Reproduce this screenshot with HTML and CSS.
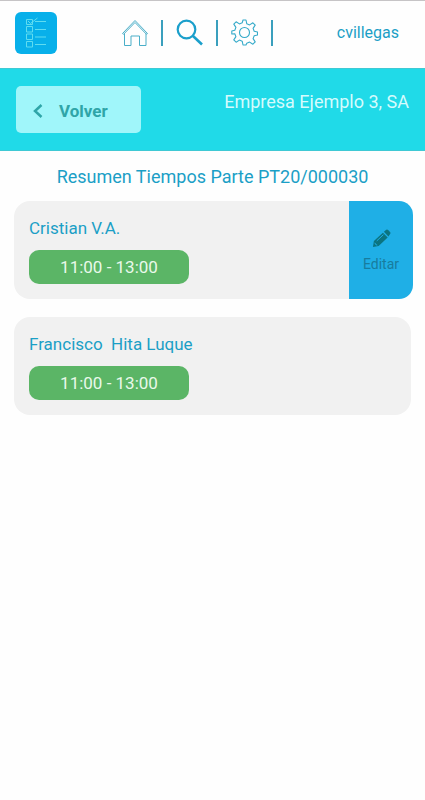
FILE: index.html
```html
<!DOCTYPE html>
<html lang="es">
<head>
<meta charset="utf-8">
<meta name="viewport" content="width=device-width, initial-scale=1">
<title>Resumen Tiempos</title>
<link rel="stylesheet" href="styles.css">
</head>
<body>
<header class="topbar">
  <a class="logo" href="#" aria-label="Partes">
    <svg viewBox="0 0 42 42" fill="none" stroke="#5fdcf0" stroke-width="1">
      <path d="M11.500 7.500h6v5h-6zM11.500 14.500h6v5.500h-6zM11.500 22h6v5.500h-6zM11.500 29.500h6v5.500h-6z"/>
      <path d="M13 9l2.500 2.500L22.500 6M20 9.500h11M20 17.500h11M20 25h11M20 32.500h11"/>
    </svg>
  </a>
  <nav class="nav">
    <a class="nav-link" href="#" aria-label="Inicio">
      <svg viewBox="0 0 27 27" fill="none" stroke="#4aaec8" stroke-width="1">
        <path d="M1.500 14.500L14 1.500 26.500 14.500M1.500 14.500l1 .8L14 3.500l11.500 11.800 1-.8M3.500 14.500v12h6.500v-9.500h8.500v9.500h6.500v-12"/>
      </svg>
    </a>
    <span class="divider"></span>
    <a class="nav-link" href="#" aria-label="Buscar">
      <svg viewBox="0 0 27 27" fill="none" stroke="#1b9fcb" stroke-width="2.200">
        <circle cx="10.500" cy="10.500" r="8.800"/>
        <path d="M17 17l9 8.500" stroke-width="2.600"/>
      </svg>
    </a>
    <span class="divider"></span>
    <a class="nav-link" href="#" aria-label="Ajustes">
      <svg viewBox="0 0 27 27" fill="none" stroke="#35aac9" stroke-width="1.100" stroke-linejoin="round">
        <path d="M12 1h3l.8 3.800 2.800 1.100 3.300-2.100 2.300 2.300-2.100 3.300 1.100 2.800 3.300.8v3l-3.300.8-1.100 2.800 2.100 3.300-2.300 2.300-3.300-2.100-2.800 1.100L15 26h-3l-.8-3.800-2.800-1.100-3.300 2.100-2.300-2.300 2.100-3.300-1.100-2.800L.8 15v-3l3-.8 1.100-2.800-2.100-3.300 2.300-2.300 3.300 2.100 2.800-1.100z"/>
        <circle cx="13.500" cy="13.500" r="5"/>
      </svg>
    </a>
    <span class="divider"></span>
  </nav>
  <a class="user" href="#">cvillegas</a>
</header>
<div class="banner">
  <button class="back" type="button">
    <svg class="chevron" viewBox="0 0 10 14" fill="none" stroke="#2fa5a8" stroke-width="2.500"><path d="M8.500 1L2 7l6.500 6"/></svg>
    Volver
  </button>
  <span class="company">Empresa Ejemplo 3, SA</span>
</div>
<main class="content">
  <h1 class="title">Resumen Tiempos Parte PT20/000030</h1>
  <section class="card">
    <div class="details">
      <h2 class="name">Cristian V.A.</h2>
      <span class="time">11:00 - 13:00</span>
    </div>
    <button class="edit" type="button">
      <svg class="pencil" viewBox="0 0 20 20">
        <path fill="#0b7480" d="M1 19l1-6.500L11.500 4l5 5L7 18z"/>
        <path fill="#0b7480" d="M12.500 3L15 .8q1-.6 2 .3l2 2q1 1 .2 2L17.300 8z"/>
        <path fill="none" stroke="#1fafe6" stroke-width="1" d="M5 12.500l7-6.500M3 14.500l1 2 1.500.5"/>
      </svg>
      Editar
    </button>
  </section>
  <section class="card">
    <div class="details">
      <h2 class="name">Francisco&nbsp; Hita Luque</h2>
      <span class="time">11:00 - 13:00</span>
    </div>
  </section>
</main>
</body>
</html>
```
FILE: styles.css
```css
* { box-sizing: border-box; }

body {
  margin: 0;
  background: #fefefe;
  color: #1b9fc6;
  font-family: Roboto, "Liberation Sans", sans-serif;
}

a { color: inherit; text-decoration: none; }

button { border: 0; font-family: inherit; cursor: pointer; }

svg { display: block; }

.topbar {
  display: flex;
  align-items: center;
  justify-content: space-between;
  height: 68px;
  padding: 0 26px 4px 15px;
  border-top: 1px solid #c6c4c6;
}

.logo {
  width: 42px;
  height: 42px;
  border-radius: 6px;
  background: #08b0ea;
}

.nav {
  display: flex;
  align-items: center;
  gap: 13px;
}

.nav-link { width: 27px; height: 27px; }

.divider {
  width: 2px;
  height: 26px;
  background: #3a9fbd;
}

.user { font-size: 16px; }

.banner {
  display: flex;
  align-items: flex-start;
  justify-content: space-between;
  padding: 17px 16px;
  border-top: 1px solid #3fc9d4;
  border-bottom: 1px solid #3fc9d4;
  background: #20dae8;
}

.back {
  display: flex;
  align-items: center;
  gap: 16px;
  width: 125px;
  height: 47px;
  padding: 2px 0 0 17px;
  border-radius: 5px;
  background: #a0f6fa;
  color: #2fa5a8;
  font-size: 17px;
  font-weight: 700;
}

.chevron { width: 10px; height: 14px; }

.company {
  padding-top: 4px;
  color: #d5fbfd;
  font-size: 18px;
  line-height: 24px;
}

.content {
  display: grid;
  gap: 18px;
  padding: 14px 14px 18px;
}

.title {
  margin: 0 0 -6px;
  font-size: 18px;
  font-weight: 400;
  line-height: 24px;
  text-align: center;
}

.card {
  display: flex;
  justify-content: space-between;
  min-height: 98px;
  border-radius: 16px;
  background: #f1f1f1;
}

.details { padding: 15px; }

.name {
  margin: 0 0 10px;
  font-size: 17px;
  font-weight: 400;
  line-height: 24px;
}

.time {
  display: block;
  width: 160px;
  border-radius: 10px;
  background: #5bb566;
  color: #e9f9ea;
  font-size: 17px;
  line-height: 34px;
  text-align: center;
}

.edit {
  display: flex;
  flex-direction: column;
  align-items: center;
  justify-content: center;
  gap: 8px;
  width: 64px;
  margin-right: -2px;
  padding: 0;
  border-radius: 0 14px 14px 0;
  background: #1fafe6;
  color: #187c9e;
  font-size: 14px;
}

.pencil { width: 19px; height: 19px; }
```
